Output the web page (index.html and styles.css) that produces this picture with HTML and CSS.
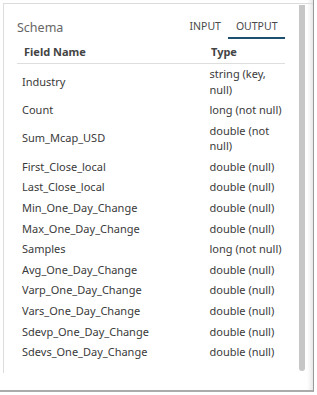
FILE: index.html
```html
<!DOCTYPE html>
<html lang="en">
<head>
	<meta charset="UTF-8">
	<title>Schema</title>
	<link rel="stylesheet" href="styles.css">
</head>
<body>
	<div class="frame">
		<div class="panel">
			<div class="content">
				<div class="head">
					<span class="title">Schema</span>
					<div class="tabs">
						<span class="tab">INPUT</span>
						<span class="tab active">OUTPUT</span>
					</div>
				</div>
				<div class="grid">
					<div class="row hdr"><span>Field Name</span><span>Type</span></div>
					<div class="row"><span>Industry</span><span>string (key, null)</span></div>
					<div class="row"><span>Count</span><span>long (not null)</span></div>
					<div class="row"><span>Sum_Mcap_USD</span><span>double (not null)</span></div>
					<div class="row"><span>First_Close_local</span><span>double (null)</span></div>
					<div class="row"><span>Last_Close_local</span><span>double (null)</span></div>
					<div class="row"><span>Min_One_Day_Change</span><span>double (null)</span></div>
					<div class="row"><span>Max_One_Day_Change</span><span>double (null)</span></div>
					<div class="row"><span>Samples</span><span>long (not null)</span></div>
					<div class="row"><span>Avg_One_Day_Change</span><span>double (null)</span></div>
					<div class="row"><span>Varp_One_Day_Change</span><span>double (null)</span></div>
					<div class="row"><span>Vars_One_Day_Change</span><span>double (null)</span></div>
					<div class="row"><span>Sdevp_One_Day_Change</span><span>double (null)</span></div>
					<div class="row"><span>Sdevs_One_Day_Change</span><span>double (null)</span></div>
				</div>
			</div>
			<div class="scroll"></div>
		</div>
	</div>
</body>
</html>
```
FILE: styles.css
```css
* { padding: 0; margin: 0; box-sizing: border-box; }
body { background: #fff; font-family: "Noto Sans", "Open Sans", sans-serif; color: #3a3a3a; }
.frame { width: 314px; height: 392px; padding: 3px 0 0 3px; border-right: 1px solid #9a9a9a; border-bottom: 2px solid #ababab; box-shadow: inset -6px 0 5px -4px rgba(0,0,0,.12); }
.panel { display: flex; height: 370px; border-top: 1px solid #dcdcdc; border-left: 1px solid #dcdcdc; }
.content { flex: 1; padding: 0 14px 0 13px; }
.scroll { width: 6px; margin: 1px 8px 0 0; height: 366px; background: #c6c6c6; border-radius: 0 0 3px 3px; }
.head { display: flex; justify-content: space-between; align-items: flex-end; padding-top: 14px; }
.title { font-size: 12.5px; line-height: 17px; color: #666; padding-bottom: 3px; }
.tabs { display: flex; }
.tab { font-size: 10.5px; line-height: 16px; color: #4a4a4a; padding: 0 7.5px 3px; border-bottom: 2px solid transparent; }
.tab.active { border-bottom-color: #1f4f6f; }
.grid { font-size: 11px; line-height: 15.5px; }
.row { display: grid; grid-template-columns: 192.5px 1fr; align-items: center; padding: 2.55px 0; }
.row span:first-child { padding-left: 5px; }
.hdr { font-weight: bold; color: #444; padding: 4.75px 0 3.25px; border-bottom: 1px solid #dedede; }
.hdr span:first-child { padding-left: 7px; }
.hdr span:last-child { padding-left: 1.5px; }
```
